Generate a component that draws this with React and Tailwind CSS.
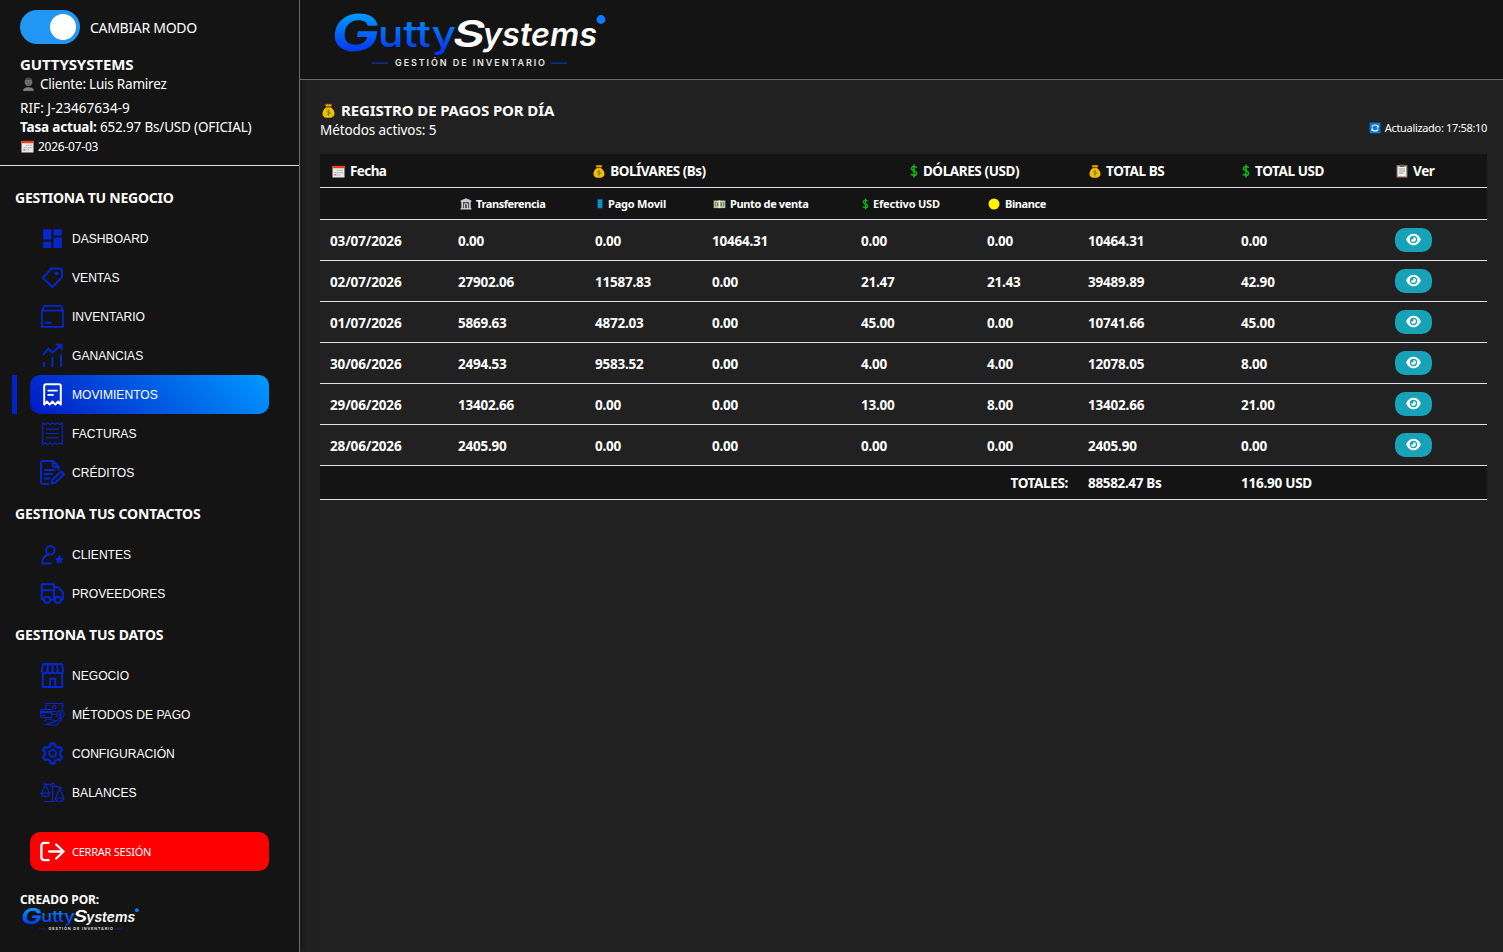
import { AiOutlineSetting } from 'react-icons/ai'
import { FaEye } from 'react-icons/fa6'
import { MdDashboard } from 'react-icons/md'

const NavSvg = ({ width = 2, children }) => (
    <svg
        viewBox="0 0 25 25"
        className="size-[25px]"
        fill="none"
        stroke="currentColor"
        strokeWidth={width}
        strokeLinecap="round"
        strokeLinejoin="round"
    >
        {children}
    </svg>
)

const TagIcon = () => (
    <NavSvg>
        <path d="M2.7 12.7 11.8 3.2 21.7 3.8 22 12.4 12.4 22z" />
        <circle cx="16.5" cy="8.3" r="1.9" fill="currentColor" stroke="none" />
    </NavSvg>
)

const BoxIcon = () => (
    <NavSvg width={1.8}>
        <path d="M1.9 6.8V22.9H23V6.8L21 1.9H4zM2 6.6H23" />
        <path d="M5.6 18.8H10.6" strokeWidth="2" />
    </NavSvg>
)

const ChartIcon = () => (
    <NavSvg>
        <path d="M3.8 11 8.3 5.8 12.4 9.8 21 2M16.5 1.8H21.6V6.4M4 19.8V23.2M12.4 14.8V23.2M21 12V23.2" />
    </NavSvg>
)

const ReceiptIcon = () => (
    <NavSvg width={2}>
        <path d="M4.2 22.6V4Q4.2 2.2 6 2.2H19Q20.8 2.2 20.8 4V22.6L18.1 19.5 15.3 22.6 12.5 19.5 9.7 22.6 6.9 19.5z" />
        <path d="M8.2 8.6H17M8.2 12.9H13" strokeWidth="1.7" />
    </NavSvg>
)

const InvoiceIcon = () => (
    <NavSvg width={1.2}>
        <path d="M2.7 1.8 5.1 3.4 7.6 1.8 10 3.4 12.5 1.8 14.9 3.4 17.4 1.8 19.8 3.4 22.3 1.8V23.5L19.8 21.9 17.4 23.5 14.9 21.9 12.5 23.5 10 21.9 7.6 23.5 5.1 21.9 2.7 23.5z" />
        <path d="M6.5 8.2H18M6.5 12.5H18M6.5 16.8H18" />
    </NavSvg>
)

const CreditIcon = () => (
    <NavSvg>
        <path d="M8.5 24H3Q1 24 1 22V3Q1 1 3 1H13L18.6 6.8V9.5M12.8 1.4V5Q12.8 7 14.8 7H18.2" />
        <path d="M4.5 9.9H14.5M4.5 14.1H12M4.5 18.4H9.5" />
        <path d="M11.5 23.6 12.4 19.8 21.2 11.5 24 14.2 15.3 22.7z" />
    </NavSvg>
)

const ClientIcon = () => (
    <NavSvg>
        <circle cx="10.4" cy="8.3" r="4.3" />
        <path d="M10.8 21.6H2.1C2 17 4.4 13.9 8.4 12.5" />
        <path
            d="M19.3 13 20.7 15.9 23.7 16.2 21.4 18.4 22 21.5 19.3 20 16.6 21.5 17.2 18.4 14.9 16.2 17.9 15.9z"
            fill="currentColor"
            strokeWidth=".3"
        />
    </NavSvg>
)

const TruckIcon = () => (
    <NavSvg>
        <path d="M3.6 18.5H1.8V3.2H14V18.5H10.6M1.8 9.2H14M14 6.2H18L22.8 11.5V18.5H21.2" />
        <circle cx="7.1" cy="18.8" r="3.1" />
        <circle cx="17.8" cy="18.8" r="3.1" />
    </NavSvg>
)

const StoreIcon = () => (
    <NavSvg>
        <path d="M3.2 1H21.8L23.2 7.5Q23 10.3 20.4 10.3T17.6 8Q17.4 10.3 15 10.3T12.5 8Q12.3 10.3 10 10.3T7.4 8Q7.2 10.3 4.6 10.3T1.8 7.5z" />
        <path d="M8 1.3 7.4 8M12.5 1.3V8M17 1.3 17.6 8M2.8 10.5V24H22.2V10.5M10 23.8V15.8H15.2V23.8" />
    </NavSvg>
)

const PaymentIcon = () => (
    <NavSvg width={1.1}>
        <path d="M5.8 7V1.5H22.6V8M9.8 9.5H16M7.5 3.2H9M19.3 3.2H21" />
        <circle cx="14.2" cy="5.3" r="1.9" />
        <rect x=".7" y="7.5" width="11.2" height="8" rx="1" />
        <path d="M.7 9.6H11.9M.7 10.7H11.9M2.6 13.5H5M11.9 12.3H16.3" />
        <circle cx="20.3" cy="12.3" r="3.7" />
        <path d="M21.5 10.9Q19.2 10.2 19.3 11.5T21.2 12.6 19.2 13.8M20.3 10V14.7" strokeWidth=".9" />
        <path d="M4 18.8 8 17.2Q10 16.5 12 18.2H15Q16.5 19.6 14.5 20.3H11M15.8 19.5 20 16.6Q22 16 21.5 17.6L17.5 22Q13 24.4 9.5 22.2L5 22.8z" />
    </NavSvg>
)

const BalanceIcon = () => (
    <NavSvg width={1.2}>
        <circle cx="12.5" cy="5.2" r="1.8" />
        <path d="M12.5 7V21.4M4.3 21.5H15M4 3.9 10.7 4.6M14.2 5.7 21.3 7.8M5.4 4.4 1.5 13.2H9.6zM1.3 13.4Q1.7 16.7 5.5 16.7T9.7 13.4M19.7 8.2 15.6 18H23.8zM15.4 18.2Q15.8 21.5 19.6 21.5T24 18.2" />
    </NavSvg>
)

const LogoutIcon = () => (
    <NavSvg width={2.3}>
        <path d="M8.6 3.8H4.5Q1.4 3.8 1.4 7V18Q1.4 21.2 4.5 21.2H8.6M9 12.5H23.5M16.2 5.5 23.6 12.5 16.2 19.5" />
    </NavSvg>
)

const MoneyBag = ({ className = 'h-[15px] w-[13px]' }) => (
    <svg viewBox="0 0 13 15" className={className}>
        <path d="M2.8.6 4.2 1.2 5.3.6 6.5 1.2 7.7.6 8.8 1.2 10.2.6 9.4 3.9H3.6z" fill="#f0a30a" stroke="#1a1200" strokeWidth=".5" />
        <path d="M4.2 4.2H8.8Q12.5 7.2 12.5 10.6T8.9 14.7H4.1Q.5 14.2 .5 10.6T4.2 4.2z" fill="#ffb900" />
        <path d="M3.7 3.9H9.3" stroke="#7a4b00" strokeWidth=".7" />
        <path d="M8 7.8Q5.1 6.8 5.1 8.4T7.9 9.9 5 11.6M6.5 6.6V12.8" fill="none" stroke="#2f9e1f" strokeWidth=".9" />
    </svg>
)

const Calendar = () => (
    <svg viewBox="0 0 13 13" className="h-[13px] w-[13px]">
        <rect x=".5" y="1" width="12" height="11.5" fill="#e8e8e8" />
        <path d="M.5 .8H12.5V3.2H.5z" fill="#e8401c" />
        <path d="M4.8 5.3H10.8M2.6 7.6H10.8M2.6 9.8H8.3" stroke="#b9b9b9" strokeWidth="1.3" strokeDasharray="1.6 .6" />
        <path d="M2.4 9H4.2V10.6H2.4z" fill="#e07a68" />
    </svg>
)

const Person = () => (
    <svg viewBox="0 0 13 15" className="h-[15px] w-[13px]">
        <path d="M.7 14.3Q.7 9.9 6.5 9.9T12.3 14.3z" fill="#808080" stroke="#000" strokeWidth=".5" />
        <ellipse cx="6.5" cy="5" rx="3.9" ry="4.3" fill="#777" stroke="#222" strokeWidth=".6" />
        <path d="M2.9 3.4Q3.4.6 6.5.6T10.1 3.4Q6.5 2 2.9 3.4z" fill="#444" />
        <path d="M4.7 4.8H5.6M7.4 4.8H8.3M5.3 7.2H7.7" stroke="#222" strokeWidth=".7" />
    </svg>
)

const Dollar = ({ className = 'h-[14px] w-[8px]' }) => (
    <svg viewBox="0 0 8 14" className={className} fill="none" stroke="#13b413" strokeWidth="1.5">
        <path d="M6.6 4Q6.2 2.6 4 2.6T1.5 4.6Q1.5 6.2 4 6.8T6.6 9.2Q6.6 11.3 4 11.3T1.3 9.8M4 .5V13.5" />
    </svg>
)

const Bank = () => (
    <svg viewBox="0 0 12 12" className="size-[12px]">
        <path d="M6 .3 11.3 2.6V4H.7V2.6zM1.3 4H3.2V10H1.3zM8.8 4H10.7V10H8.8zM.6 10H11.4V11.6H.6z" fill="#c9c9c9" />
        <path d="M3.2 4H8.8V10H3.2z" fill="#5b5b5b" />
        <path d="M4.2 5.5H7.8V10H4.2z" fill="#e3e3e3" />
        <path d="M5.2 6.3H6.8V10H5.2z" fill="#333" />
    </svg>
)

const Phone = () => (
    <svg viewBox="0 0 8 12" className="h-[12px] w-[8px]">
        <rect x="1" y=".4" width="6" height="11.2" rx=".8" fill="#10313f" />
        <path d="M1.8 1.6H6.2V9.8H1.8z" fill="#0aa3da" />
        <path d="M2.4 3.2H5.6M2.4 5.4H5.6M2.4 7.6H5.6" stroke="#10506b" strokeWidth=".7" strokeDasharray=".9 .5" />
    </svg>
)

const Bill = () => (
    <svg viewBox="0 0 13 9" className="h-[9px] w-[13px]">
        <rect x=".7" y=".5" width="11.6" height="7.6" fill="#b9c7a2" />
        <circle cx="6.5" cy="4.3" r="2.5" fill="#5e6d54" />
        <path d="M3.2 2.6H2.4V6H3.2M9.8 2.6H10.6V6H9.8" fill="none" stroke="#5e7a4a" strokeWidth=".8" />
        <path d="M5.4.5H7.4V8.1H5.4z" fill="#f1efe0" />
    </svg>
)

const Coin = () => (
    <svg viewBox="0 0 12 12" className="size-[12px]">
        <circle cx="6" cy="6" r="5.5" fill="#fff100" />
    </svg>
)

const Clipboard = () => (
    <svg viewBox="0 0 12 14" className="h-[14px] w-[12px]">
        <rect x=".6" y="1.2" width="10.8" height="12.3" fill="#a08778" />
        <rect x="1.8" y="2.6" width="8.4" height="9.7" fill="#eee" />
        <path d="M4 .4H8V2.8H4z" fill="#555" />
        <path d="M3 5H9M3 7H9M3 9H7.4" stroke="#8d8d8d" strokeWidth=".8" />
    </svg>
)

const Refresh = () => (
    <svg viewBox="0 0 12 12" className="size-[12px]">
        <rect x=".6" y=".6" width="10.8" height="10.8" fill="#0b78d4" />
        <path d="M3 5.4Q3.4 3 6 3T8.8 4.6M9 6.6Q8.6 9 6 9T3.2 7.4" fill="none" stroke="#fff" strokeWidth="1.1" />
        <path d="M9.6 3V5.4H7.4zM2.4 9V6.6H4.6z" fill="#fff" />
    </svg>
)

const Logo = ({ id, className }) => (
    <svg viewBox="0 0 275 56" className={`overflow-visible ${className}`}>
        <defs>
            <linearGradient id={id} gradientUnits="userSpaceOnUse" x1="0" y1="2" x2="0" y2="42">
                <stop offset="0" stopColor="#0099ff" />
                <stop offset="1" stopColor="#0530ee" />
            </linearGradient>
        </defs>
        <g fill={`url(#${id})`} fontFamily="Inter, sans-serif">
            <text x="3" y="39" fontSize="51" fontWeight="700" transform="skewX(-8)" textLength="48" lengthAdjust="spacingAndGlyphs">G</text>
            <text x="46" y="35" fontSize="37" fontWeight="500" textLength="78" lengthAdjust="spacingAndGlyphs">utty</text>
        </g>
        <g fill="#fff" fontFamily="Inter, sans-serif" fontStyle="italic">
            <text x="121" y="35" fontSize="37.5" fontWeight="600" textLength="32" lengthAdjust="spacingAndGlyphs">S</text>
            <text x="151" y="34.4" fontSize="32" fontWeight="600" textLength="114" lengthAdjust="spacingAndGlyphs">ystems</text>
        </g>
        <circle cx="269" cy="7.5" r="4.4" fill="#0a7cfb" />
        <path d="M39.5 51.2H56M218.5 51.2H235" stroke="#0a35b0" strokeWidth="1.2" />
        <text x="63" y="54.4" fill="#e4e4e4" fontFamily="Inter, sans-serif" fontSize="9" fontWeight="600" textLength="150">
            GESTIÓN DE INVENTARIO
        </text>
    </svg>
)

const menu = [
    {
        title: 'GESTIONA TU NEGOCIO',
        tracking: 'tracking-[-0.25px]',
        items: [
            { label: 'DASHBOARD', icon: <MdDashboard className="size-[25px]" /> },
            { label: 'VENTAS', icon: <TagIcon /> },
            { label: 'INVENTARIO', icon: <BoxIcon /> },
            { label: 'GANANCIAS', icon: <ChartIcon /> },
            { label: 'MOVIMIENTOS', icon: <ReceiptIcon />, active: true },
            { label: 'FACTURAS', icon: <InvoiceIcon /> },
            { label: 'CRÉDITOS', icon: <CreditIcon /> },
        ],
    },
    {
        title: 'GESTIONA TUS CONTACTOS',
        tracking: 'tracking-[-0.12px]',
        items: [
            { label: 'CLIENTES', icon: <ClientIcon /> },
            { label: 'PROVEEDORES', icon: <TruckIcon /> },
        ],
    },
    {
        title: 'GESTIONA TUS DATOS',
        tracking: 'tracking-[-0.1px]',
        items: [
            { label: 'NEGOCIO', icon: <StoreIcon /> },
            { label: 'MÉTODOS DE PAGO', icon: <PaymentIcon /> },
            { label: 'CONFIGURACIÓN', icon: <AiOutlineSetting className="size-[25px] stroke-[24px]" /> },
            { label: 'BALANCES', icon: <BalanceIcon /> },
        ],
    },
]

const rows = [
    ['03/07/2026', '0.00', '0.00', '10464.31', '0.00', '0.00', '10464.31', '0.00'],
    ['02/07/2026', '27902.06', '11587.83', '0.00', '21.47', '21.43', '39489.89', '42.90'],
    ['01/07/2026', '5869.63', '4872.03', '0.00', '45.00', '0.00', '10741.66', '45.00'],
    ['30/06/2026', '2494.53', '9583.52', '0.00', '4.00', '4.00', '12078.05', '8.00'],
    ['29/06/2026', '13402.66', '0.00', '0.00', '13.00', '8.00', '13402.66', '21.00'],
    ['28/06/2026', '2405.90', '0.00', '0.00', '0.00', '0.00', '2405.90', '0.00'],
]

const NavItem = ({ label, icon, active }) => (
    <li className="flex h-[39px]">
        <span className={active ? 'mr-[13px] w-[5px] bg-[#0022c8]' : 'mr-[13px] w-[5px]'} />
        <a
            href="#"
            className={
                active
                    ? 'flex w-[239px] items-center gap-[7px] rounded-[10px] bg-[linear-gradient(45deg,#0019c4,#0099ff)] pl-[10px] text-white'
                    : 'flex w-[239px] items-center gap-[7px] rounded-[10px] pl-[10px] text-[#0527cb]'
            }
        >
            {icon}
            <span className="pt-0.5 font-['Liberation_Sans',sans-serif] text-[12.1px] text-white">{label}</span>
        </a>
    </li>
)

const Sidebar = () => (
    <aside className="z-10 flex w-[300px] shrink-0 flex-col border-r border-[#6b6b6b] bg-[#141414] shadow-[0_0_10px_rgba(0,0,0,0.5)]">
        <div className="h-[166px] border-b border-[#ddd] pl-5 pt-[10px]">
            <div className="flex h-[34px] items-center gap-[10px]">
                <div className="flex h-[34px] w-[60px] items-center justify-end rounded-full bg-[#2196f3] pr-1">
                    <span className="size-[26px] rounded-full bg-white" />
                </div>
                <span className="text-[14px] tracking-[-0.3px]">CAMBIAR MODO</span>
            </div>
            <p className="mt-[11px] h-[19px] text-[15px] leading-[18px] font-bold tracking-[-0.1px]">GUTTYSYSTEMS</p>
            <p className="flex h-[20px] items-center gap-[5px] pl-[2px] pt-px text-[13.5px] tracking-[-0.22px]">
                <Person /> Cliente: Luis Ramirez
            </p>
            <p className="mt-[4px] h-[19px] text-[13.5px] leading-[20px] tracking-[0.05px]">RIF: J-23467634-9</p>
            <p className="h-[20px] text-[13.5px] leading-[20px] tracking-[-0.18px]">
                <b>Tasa actual:</b> 652.97 Bs/USD (OFICIAL)
            </p>
            <p className="flex h-[19px] items-center gap-[4px] pl-[1px] text-[12px] tracking-[-0.25px]">
                <Calendar /> 2026-07-03
            </p>
        </div>

        <nav className="flex flex-col pt-[10px]">
            {menu.map((group) => (
                <section key={group.title}>
                    <h3 className={`h-[43px] pl-[15px] text-[14px] leading-[43px] font-bold ${group.tracking}`}>
                        {group.title}
                    </h3>
                    <ul className="pl-3">
                        {group.items.map((item) => (
                            <NavItem key={item.label} {...item} />
                        ))}
                    </ul>
                </section>
            ))}
        </nav>

        <button className="ml-[30px] mt-5 flex h-[39px] w-[239px] items-center gap-[7px] rounded-[10px] bg-[#ff0000] pl-[10px] text-[11px] tracking-[-0.25px]">
            <LogoutIcon />
            <span className="pt-0.5">CERRAR SESIÓN</span>
        </button>

        <div className="pl-5 pt-[21px]">
            <p className="h-[15px] text-[12px] leading-[16px] font-bold tracking-[-0.1px]">CREADO POR:</p>
            <Logo id="logo-footer" className="ml-px h-[24px] w-[119px]" />
        </div>
    </aside>
)

const line = 'border-b border-[#dee2e6]'
const th = `${line} bg-[#141414] px-[10px] pt-px text-left font-bold`

const PaymentsTable = () => (
    <table className="mt-[14px] w-[1167px] table-fixed border-separate border-spacing-0 text-[13.5px] font-bold">
        <colgroup>
            <col className="w-[128px]" />
            <col className="w-[137px]" />
            <col className="w-[117px]" />
            <col className="w-[149px]" />
            <col className="w-[126px]" />
            <col className="w-[101px]" />
            <col className="w-[153px]" />
            <col className="w-[154px]" />
            <col className="w-[102px]" />
        </colgroup>
        <thead>
            <tr className="h-[34px] tracking-[-0.4px]">
                <th className={th}>
                    <span className="flex items-center gap-[5px] pl-[2px] tracking-[-0.6px]"><Calendar /> Fecha</span>
                </th>
                <th className={th} colSpan={3}>
                    <span className="flex items-center justify-center gap-[5px] tracking-[-0.5px]"><MoneyBag className="h-[14px] w-[12px]" /> BOLÍVARES (Bs)</span>
                </th>
                <th className={th} colSpan={2}>
                    <span className="flex items-center justify-center gap-[5px]"><Dollar /> DÓLARES (USD)</span>
                </th>
                <th className={th}>
                    <span className="flex items-center gap-[5px] pl-[1px]"><MoneyBag className="h-[14px] w-[12px]" /> TOTAL BS</span>
                </th>
                <th className={th}>
                    <span className="flex items-center gap-[5px] pl-[1px]"><Dollar /> TOTAL USD</span>
                </th>
                <th className={th}>
                    <span className="flex items-center gap-[5px] pl-[1px]"><Clipboard /> Ver</span>
                </th>
            </tr>
            <tr className="h-[32px] text-[11px] tracking-[-0.4px]">
                <th className={th} />
                <th className={th}>
                    <span className="flex items-center gap-[4px] pl-[2px]"><Bank /> Transferencia</span>
                </th>
                <th className={th}>
                    <span className="flex items-center gap-[4px] pl-[1px] tracking-[-0.2px]"><Phone /> Pago Movil</span>
                </th>
                <th className={th}>
                    <span className="flex items-center gap-[4px] pl-[1px] tracking-[-0.35px]"><Bill /> Punto de venta</span>
                </th>
                <th className={th}>
                    <span className="flex items-center gap-[4px] pl-[1px] tracking-[-0.2px]"><Dollar className="h-[12px] w-[7px]" /> Efectivo USD</span>
                </th>
                <th className={th}>
                    <span className="flex items-center gap-[5px] pl-[1px]"><Coin /> Binance</span>
                </th>
                <th className={th} />
                <th className={th} />
                <th className={th} />
            </tr>
        </thead>
        <tbody>
            {rows.map((row) => (
                <tr key={row[0]} className="h-[41px] tracking-[-0.22px]">
                    {row.map((value, i) => (
                        <td key={i} className={i === 0 ? `${line} px-[10px] pt-[3px] tracking-[-0.15px]` : `${line} px-[10px] pt-[3px]`}>
                            {value}
                        </td>
                    ))}
                    <td className={`${line} px-[10px]`}>
                        <button className="flex h-[24px] w-[37px] items-center justify-center rounded-[10px] bg-[#17a2b8] pb-px">
                            <FaEye className="h-[13px] w-[15px]" />
                        </button>
                    </td>
                </tr>
            ))}
        </tbody>
        <tfoot>
            <tr className="h-[34px] tracking-[-0.35px]">
                <td className={`${th} text-right!`} colSpan={6}>TOTALES:</td>
                <td className={th}>88582.47 Bs</td>
                <td className={`${th} tracking-[-0.25px]`}>116.90 USD</td>
                <td className={th} />
            </tr>
        </tfoot>
    </table>
)

const App = () => {
    return (
        <div className="flex h-[952px] w-[1503px] overflow-hidden bg-[#212121] font-['Noto_Sans',sans-serif] text-white">
            <Sidebar />

            <div className="flex-1">
                <header className="relative z-20 h-[80px] border-b border-[#6b6b6b] bg-[#141414] pl-8 pt-3">
                    <Logo id="logo-header" className="h-[56px] w-[275px]" />
                </header>

                <main className="pl-5 pr-4 pt-[20px]">
                    <div className="flex h-[40px] items-start justify-between">
                        <div>
                            <h1 className="flex h-[20px] items-center gap-[6px] pl-[2px] pt-px text-[15px] font-bold tracking-[-0.13px]">
                                <MoneyBag /> REGISTRO DE PAGOS POR DÍA
                            </h1>
                            <p className="h-[20px] text-[13.5px] leading-[20px] tracking-[-0.1px]">Métodos activos: 5</p>
                        </div>
                        <p className="mb-1 flex h-[16px] items-center gap-[4px] self-end text-[11px] tracking-[-0.33px]">
                            <Refresh /> Actualizado: 17:58:10
                        </p>
                    </div>

                    <PaymentsTable />
                </main>
            </div>
        </div>
    )
}

export default App
